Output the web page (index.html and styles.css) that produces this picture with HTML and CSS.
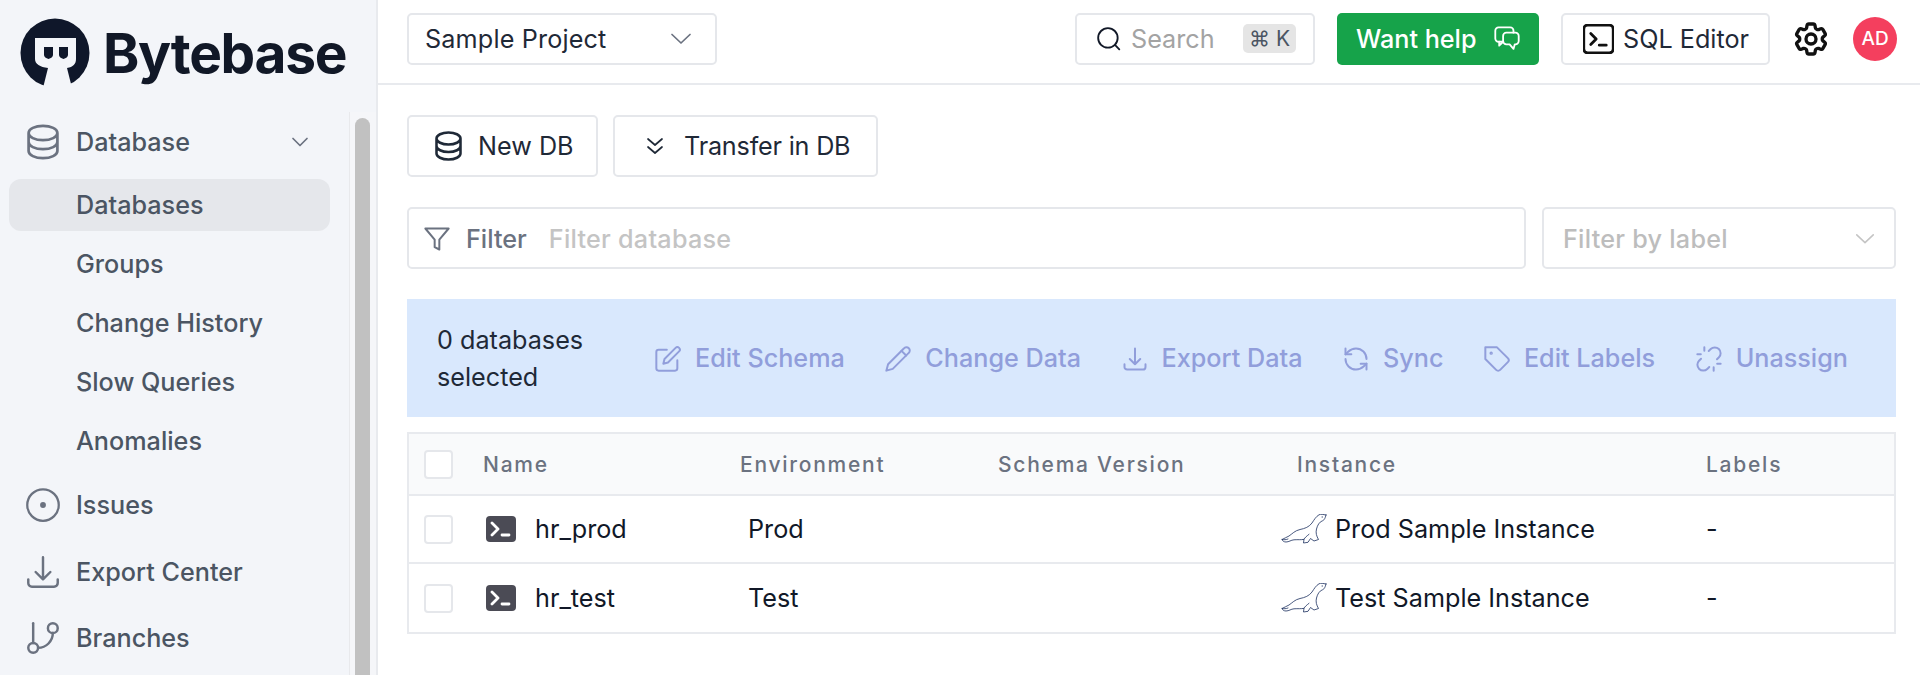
FILE: index.html
```html
<!DOCTYPE html>
<html lang="en">
<head>
<meta charset="UTF-8">
<title>Bytebase - Databases</title>
<link rel="stylesheet" href="styles.css">
</head>
<body>
<svg class="defs" aria-hidden="true">
  <symbol id="i-db" viewBox="0 0 24 24"><path d="M4 7v10c0 2.21 3.582 4 8 4s8-1.79 8-4V7M4 7c0 2.21 3.582 4 8 4s8-1.79 8-4M4 7c0-2.21 3.582-4 8-4s8 1.79 8 4m0 5c0 2.21-3.582 4-8 4s-8-1.79-8-4"/></symbol>
  <symbol id="i-download" viewBox="0 0 24 24"><path d="M3 16.5v2.25A2.25 2.25 0 0 0 5.25 21h13.5A2.25 2.25 0 0 0 21 18.75V16.5M16.5 12 12 16.5m0 0L7.5 12m4.5 4.5V3"/></symbol>
  <symbol id="i-term" viewBox="0 0 24 24"><rect x="2.5" y="3" width="19" height="18" rx="2.5"/><path d="m7 8.5 3.5 3.5L7 15.500M12.5 16H17"/></symbol>
  <symbol id="i-seal" viewBox="0 0 46 30"><path d="M45 1C42 .5 40-.2 38 .8 35 2.500 33 6 31 9 28 13 24 14.500 19 15.500 14 16.500 11 20 8 22 6 23.500 3 24 1 25.500 1.500 27 3 28 5 28 8 28 10 26 13 25.800 17 25.500 20 26 23 25.300L22.500 29 27 28.300 29.500 24.500 33 27 37.500 25.500C35.500 22 34.500 19 35.500 15 36.500 11 38.500 8 41 7 43 6.300 44 5 45 1z"/><path d="M23 25.300c1-2 3-3.300 5-5M1 25.500c2 .5 4 .3 6-.5M41 3h.6"/></symbol>
</svg>

<aside class="sidebar">
  <div class="logo">
    <svg class="logo-mark" viewBox="0 0 70 70">
      <circle cx="35" cy="35" r="34.5" fill="#0f172a"/>
      <path d="M15 20h41v21c0 5-3 8-9 9l5 20H23l5-20c-8-1-13-4-13-9z" fill="#f3f5f9"/>
      <path d="M24 29h9v8c0 2-2 3-4.500 4C26 40 24 39 24 37zM39 29h9v8c0 2-2 3-4.500 4-2.500-1-4.500-2-4.500-4z" fill="#0f172a"/>
    </svg>
    <span class="logo-text">Bytebase</span>
  </div>
  <div class="nav-wrap">
    <nav class="nav">
      <a class="nav-item nav-group">
        <svg class="nav-icon" viewBox="3 2 18 20"><use href="#i-db" width="24" height="24"/></svg>Database
        <svg class="nav-chev" viewBox="0 0 24 24"><path d="m5 8.500 7 7 7-7"/></svg>
      </a>
      <a class="nav-sub active">Databases</a>
      <a class="nav-sub">Groups</a>
      <a class="nav-sub">Change History</a>
      <a class="nav-sub">Slow Queries</a>
      <a class="nav-sub">Anomalies</a>
      <a class="nav-item nav-top nav-first">
        <svg class="nav-icon" viewBox="0 0 24 24"><circle cx="12" cy="12" r="10.500"/><circle class="dot" cx="12" cy="12" r="1.200"/></svg>Issues
      </a>
      <a class="nav-item nav-top">
        <svg class="nav-icon" viewBox="1 1 22 22"><use href="#i-download" width="24" height="24"/></svg>Export Center
      </a>
      <a class="nav-item nav-top">
        <svg class="nav-icon" viewBox="1 1 22 22"><path d="M6 3v12"/><circle cx="18" cy="6" r="3"/><circle cx="6" cy="18" r="3"/><path d="M18 9a9 9 0 0 1-9 9"/></svg>Branches
      </a>
    </nav>
    <div class="scroll-track"><div class="scroll-thumb"></div></div>
  </div>
</aside>

<div class="page">
  <header class="topbar">
    <div class="project-select">
      <span>Sample Project</span>
      <svg class="select-chev" viewBox="0 0 24 24"><path d="m3 7.500 9 8.500 9-8.500"/></svg>
    </div>
    <div class="top-right">
      <div class="search">
        <svg class="ic-26" viewBox="0 0 24 24"><circle cx="11" cy="11" r="9"/><path d="m17.500 17.500 4 4"/></svg>
        <span class="search-text">Search</span>
        <kbd class="kbd">⌘ K</kbd>
      </div>
      <button class="btn-help">Want help
        <svg class="ic-chat" viewBox="2 3 20 19"><path d="M9 15H5.500A2.500 2.500 0 0 1 3 12.500v-6A2.500 2.500 0 0 1 5.500 4h9A2.500 2.500 0 0 1 17 6.500V8"/><path d="M11.500 8h7A2.500 2.500 0 0 1 21 10.500v4a2.500 2.500 0 0 1-2.500 2.500H18l-1 3.500-3-3.500h-2.500A2.500 2.500 0 0 1 9 14.500v-4A2.500 2.500 0 0 1 11.500 8z"/><path d="M6 15v3l3-3"/></svg>
      </button>
      <button class="btn btn-sql">
        <svg class="ic-term" viewBox="2 2.500 20 19"><use href="#i-term" width="24" height="24"/></svg>SQL Editor
      </button>
      <svg class="gear" viewBox="0 0 24 24"><path d="M9.594 3.940c.09-.542.56-.94 1.110-.94h2.593c.55 0 1.020.398 1.110.94l.213 1.281c.063.374.313.686.645.870.074.04.147.083.22.127.324.196.72.257 1.075.124l1.217-.456a1.125 1.125 0 0 1 1.370.49l1.296 2.247a1.125 1.125 0 0 1-.26 1.431l-1.003.827c-.293.24-.438.613-.431.992a6.759 6.759 0 0 1 0 .255c-.007.378.138.75.43.99l1.005.828c.424.35.534.954.26 1.430l-1.298 2.247a1.125 1.125 0 0 1-1.369.491l-1.217-.456c-.355-.133-.75-.072-1.076.124a6.570 6.570 0 0 1-.22.128c-.331.183-.581.495-.644.869l-.213 1.280c-.09.543-.56.941-1.110.941h-2.594c-.55 0-1.020-.398-1.110-.94l-.213-1.281c-.062-.374-.312-.686-.644-.87a6.520 6.520 0 0 1-.22-.127c-.325-.196-.72-.257-1.076-.124l-1.217.456a1.125 1.125 0 0 1-1.369-.49l-1.297-2.247a1.125 1.125 0 0 1 .26-1.431l1.004-.827c.292-.24.437-.613.43-.992a6.932 6.932 0 0 1 0-.255c.007-.378-.138-.75-.43-.99l-1.004-.828a1.125 1.125 0 0 1-.26-1.430l1.297-2.247a1.125 1.125 0 0 1 1.370-.491l1.216.456c.356.133.751.072 1.076-.124.072-.044.146-.087.22-.128.332-.183.582-.495.644-.869l.214-1.281z"/><circle cx="12" cy="12" r="3"/></svg>
      <div class="avatar">AD</div>
    </div>
  </header>

  <main class="content">
    <div class="btn-row">
      <button class="btn btn-new"><svg class="ic-db" viewBox="3 2 18 20"><use href="#i-db" width="24" height="24"/></svg>New DB</button>
      <button class="btn btn-transfer">
        <svg class="ic-24" viewBox="0 0 24 24"><path d="m5 5 7 6 7-6M5 13l7 6 7-6"/></svg>Transfer in DB
      </button>
    </div>

    <div class="filter-row">
      <div class="filter">
        <svg class="filter-icon" viewBox="0 0 24 24"><path d="M22 3H2l8 9.460V19l4 2v-8.540z"/></svg>
        <span class="filter-label">Filter</span>
        <span class="filter-ph">Filter database</span>
      </div>
      <div class="label-select">
        <span>Filter by label</span>
        <svg class="label-chev" viewBox="0 0 24 24"><path d="m3 7.500 9 8.500 9-8.500"/></svg>
      </div>
    </div>

    <div class="banner">
      <div class="banner-count">0 databases selected</div>
      <div class="banner-actions">
        <span class="action">
          <svg class="ic-28" viewBox="0 0 24 24"><path d="M11 4H4a2 2 0 0 0-2 2v14a2 2 0 0 0 2 2h14a2 2 0 0 0 2-2v-7"/><path d="M18.500 2.500a2.121 2.121 0 0 1 3 3L12 15l-4 1 1-4z"/></svg>Edit Schema
        </span>
        <span class="action">
          <svg class="ic-28" viewBox="0 0 24 24"><path d="M17 3a2.850 2.850 0 1 1 4 4L7.500 20.500 2 22l1.500-5.500z"/><path d="m15 5 4 4"/></svg>Change Data
        </span>
        <span class="action">
          <svg class="ic-28"><use href="#i-download" width="28" height="28"/></svg>Export Data
        </span>
        <span class="action">
          <svg class="ic-28" viewBox="0 0 24 24"><path d="M21 12a9 9 0 0 0-9-9 9.750 9.750 0 0 0-6.740 2.740L3 8"/><path d="M3 3v5h5"/><path d="M3 12a9 9 0 0 0 9 9 9.750 9.750 0 0 0 6.740-2.740L21 16"/><path d="M16 16h5v5"/></svg>Sync
        </span>
        <span class="action">
          <svg class="ic-28" viewBox="0 0 24 24"><path d="M12 2H2v10l9.290 9.290c.94.94 2.480.94 3.420 0l6.580-6.580c.94-.94.94-2.480 0-3.420z"/><circle cx="7" cy="7" r=".6"/></svg>Edit Labels
        </span>
        <span class="action">
          <svg class="ic-28" viewBox="0 0 24 24"><path d="m18.840 12.250 1.720-1.710h-.02a5.004 5.004 0 0 0-.12-7.070 5.006 5.006 0 0 0-6.950 0l-1.720 1.710"/><path d="m5.170 11.750-1.710 1.710a5.004 5.004 0 0 0 .12 7.070 5.006 5.006 0 0 0 6.950 0l1.710-1.710"/><path d="M8 2v3M2 8h3M16 19v3M19 16h3"/></svg>Unassign
        </span>
      </div>
    </div>

    <div class="table">
      <div class="tr th">
        <div class="td td-check"><span class="check"></span></div>
        <div class="td">Name</div>
        <div class="td">Environment</div>
        <div class="td">Schema Version</div>
        <div class="td">Instance</div>
        <div class="td">Labels</div>
      </div>
      <div class="tr">
        <div class="td td-check"><span class="check"></span></div>
        <div class="td td-name"><svg class="db-term" viewBox="0 0 30 26"><rect width="30" height="26" rx="4"/><path d="m6 7 6 6-6 6M16 19h7"/></svg>hr_prod</div>
        <div class="td td-env">Prod</div>
        <div class="td"></div>
        <div class="td td-inst"><svg class="seal"><use href="#i-seal" width="46" height="30"/></svg>Prod Sample Instance</div>
        <div class="td">-</div>
      </div>
      <div class="tr">
        <div class="td td-check"><span class="check"></span></div>
        <div class="td td-name"><svg class="db-term" viewBox="0 0 30 26"><rect width="30" height="26" rx="4"/><path d="m6 7 6 6-6 6M16 19h7"/></svg>hr_test</div>
        <div class="td td-env">Test</div>
        <div class="td"></div>
        <div class="td td-inst"><svg class="seal"><use href="#i-seal" width="46" height="30"/></svg>Test Sample Instance</div>
        <div class="td">-</div>
      </div>
    </div>
  </main>
</div>
</body>
</html>
```

FILE: styles.css
```css
* {
  box-sizing: border-box;
}

html, body {
  height: 675px;
  margin: 0;
  overflow: hidden;
}

body {
  display: flex;
  background: #fff;
  color: #111827;
  font-family: Inter, "Noto Sans", sans-serif;
  font-size: 25.2px;
}

svg {
  fill: none;
  stroke: currentColor;
  stroke-width: 1.7;
  stroke-linecap: round;
  stroke-linejoin: round;
  flex: none;
}

.defs {
  display: none;
}

button {
  font: inherit;
  background: none;
  white-space: nowrap;
}

/* sidebar */
.sidebar {
  width: 378px;
  flex: none;
  background: #f3f5f9;
  border-right: 2px solid #e8eaee;
  overflow: hidden;
}

.logo {
  display: flex;
  align-items: center;
  height: 112px;
  padding: 0 0 6px 20px;
  gap: 13px;
  color: #111827;
}

.logo-mark {
  width: 70px;
  height: 70px;
  stroke: none;
}

.logo-text {
  font-size: 55px;
  font-weight: 700;
  letter-spacing: -1.3px;
}

.nav-wrap {
  display: flex;
  height: 563px;
}

.nav {
  flex: 1;
  padding: 0 19px 0 9px;
  color: #4b5563;
  font-weight: 500;
}

.nav-item {
  display: flex;
  align-items: center;
  height: 60px;
  padding-left: 16px;
  gap: 15px;
}

.nav-group {
  margin-bottom: 7px;
}

.nav-top {
  height: 66.5px;
}

.nav-first {
  margin-top: -2px;
}

.nav-icon {
  width: 36px;
  height: 36px;
  color: #6b7280;
  stroke-width: 1.5;
}

.nav-icon .dot {
  fill: currentColor;
}

.nav-chev {
  width: 24px;
  height: 24px;
  margin-left: auto;
  margin-right: 18px;
  color: #6b7280;
}

.nav-sub {
  display: flex;
  align-items: center;
  height: 52px;
  margin-bottom: 7px;
  padding-left: 67px;
  border-radius: 12px;
}

.nav-sub.active {
  background: #e5e7eb;
}

.scroll-track {
  width: 27px;
  flex: none;
  padding: 6px 6px 0 5px;
  background: #f5f6f9;
  border-left: 1px solid #e8e9ec;
}

.scroll-thumb {
  height: 100%;
  background: #c1c1c1;
  border-radius: 8px 8px 0 0;
}

/* top bar */
.page {
  flex: 1;
  min-width: 0;
}

.topbar {
  display: flex;
  align-items: center;
  justify-content: space-between;
  height: 85px;
  padding: 0 23px 6px 29px;
  border-bottom: 2px solid #e8eaee;
}

.project-select {
  display: flex;
  align-items: center;
  justify-content: space-between;
  width: 310px;
  height: 52px;
  padding: 0 22px 0 16px;
  border: 2px solid #e5e7eb;
  border-radius: 5px;
  color: #1f2937;
  letter-spacing: .15px;
}

.select-chev {
  width: 24px;
  height: 24px;
  color: #6b7280;
}

.top-right {
  display: flex;
  align-items: center;
}

.search {
  display: flex;
  align-items: center;
  width: 240px;
  height: 52px;
  padding: 0 17px 0 19px;
  border: 2px solid #e5e7eb;
  border-radius: 5px;
}

.ic-24 {
  width: 24px;
  height: 24px;
}

.ic-26 {
  width: 26px;
  height: 26px;
}

.ic-28 {
  width: 28px;
  height: 28px;
}

.ic-db {
  width: 27px;
  height: 30px;
}

.ic-chat {
  width: 26px;
  height: 25px;
  stroke-width: 1.4;
}

.ic-term {
  width: 31px;
  height: 30px;
  stroke-width: 1.8;
  color: #111;
}

.search-text {
  margin-left: 9px;
  color: #a3a3a3;
}

.kbd {
  margin-left: auto;
  padding: 2px 6px;
  background: #e5e5e5;
  border-radius: 5px;
  color: #4b5563;
  font-family: inherit;
  font-size: 21px;
}

.btn-help {
  display: flex;
  align-items: center;
  justify-content: space-between;
  width: 202px;
  height: 52px;
  margin-left: 22px;
  padding: 0 19px;
  border: none;
  border-radius: 5px;
  background: #16a34a;
  color: #fff;
  font-weight: 500;
}

.btn {
  display: flex;
  align-items: center;
  border: 2px solid #e5e7eb;
  border-radius: 5px;
  color: #1f2937;
}

.btn-sql {
  width: 209px;
  height: 52px;
  margin-left: 22px;
  padding: 0 20px;
  gap: 9px;
}

.gear {
  width: 40px;
  height: 40px;
  margin-left: 21px;
  color: #111;
  stroke-width: 2;
}

.avatar {
  display: flex;
  align-items: center;
  justify-content: center;
  width: 44px;
  height: 44px;
  margin-left: 22px;
  border-radius: 50%;
  background: #f43f5e;
  color: #fff;
  font-size: 19px;
  font-weight: 500;
}

/* main content */
.content {
  padding: 30px 24px 0 29px;
}

.btn-row {
  display: flex;
  gap: 15px;
}

.btn-new,
.btn-transfer {
  height: 62px;
}

.btn-new {
  width: 191px;
  padding: 0 26px;
  gap: 16px;
}

.btn-transfer {
  width: 265px;
  padding: 0 28px;
  gap: 17px;
  letter-spacing: -.2px;
}

.filter-row {
  display: flex;
  gap: 16px;
  margin-top: 30px;
}

.filter {
  display: flex;
  flex: 1;
  align-items: center;
  height: 62px;
  padding: 1px 14px 0;
  border: 2px solid #e5e7eb;
  border-radius: 5px;
}

.filter-icon {
  width: 28px;
  height: 28px;
  color: #6b7280;
}

.filter-label {
  margin-left: 15px;
  color: #6b7280;
  font-weight: 500;
}

.filter-ph {
  margin-left: 22px;
  color: #c4c4c4;
  font-weight: 500;
  letter-spacing: .25px;
}

.label-select {
  display: flex;
  align-items: center;
  justify-content: space-between;
  width: 354px;
  height: 62px;
  padding: 1px 18px 0 19px;
  border: 2px solid #e5e7eb;
  border-radius: 5px;
  color: #bdbdbd;
  font-weight: 500;
  letter-spacing: .25px;
}

.label-chev {
  width: 22px;
  height: 22px;
  color: #c4c4c4;
}

.banner {
  display: flex;
  align-items: center;
  height: 118px;
  margin-top: 30px;
  padding: 1px 48px 0 30px;
  background: #d9e8fd;
  line-height: 37px;
}

.banner-count {
  width: 160px;
  flex: none;
  color: #1f2937;
}

.banner-actions {
  display: flex;
  flex: 1;
  justify-content: space-between;
  margin-left: 57px;
  color: #919edb;
  font-weight: 500;
}

.action {
  display: flex;
  align-items: center;
  gap: 13px;
}

.table {
  margin-top: 15px;
  border: 2px solid #e8eaee;
}

.tr {
  display: grid;
  grid-template-columns: 58px 257px 258px 299px 409px 1fr;
  height: 68px;
  border-bottom: 2px solid #e8eaee;
}

.tr:last-child {
  border-bottom: none;
}

.th {
  height: 62px;
  background: #f9fafb;
  color: #6b7280;
  font-size: 21px;
  font-weight: 500;
  letter-spacing: 1.75px;
}

.td {
  display: flex;
  align-items: center;
  padding-left: 16px;
  white-space: nowrap;
}

.td-check {
  padding-left: 15px;
}

.check {
  width: 29px;
  height: 29px;
  border: 2px solid #e5e7eb;
  border-radius: 4px;
  background: #fff;
}

.td-name {
  padding-left: 19px;
  gap: 19px;
}

.td-env {
  padding-left: 24px;
}

.td-inst {
  padding-left: 0;
  gap: 8px;
}

.db-term {
  width: 30px;
  height: 26px;
  stroke: none;
}

.db-term rect {
  fill: #4b4b55;
}

.db-term path {
  fill: none;
  stroke: #fff;
  stroke-width: 2.8;
}

.seal {
  width: 46px;
  height: 30px;
  color: #1a2f5e;
  stroke-width: 0.8;
}
```
